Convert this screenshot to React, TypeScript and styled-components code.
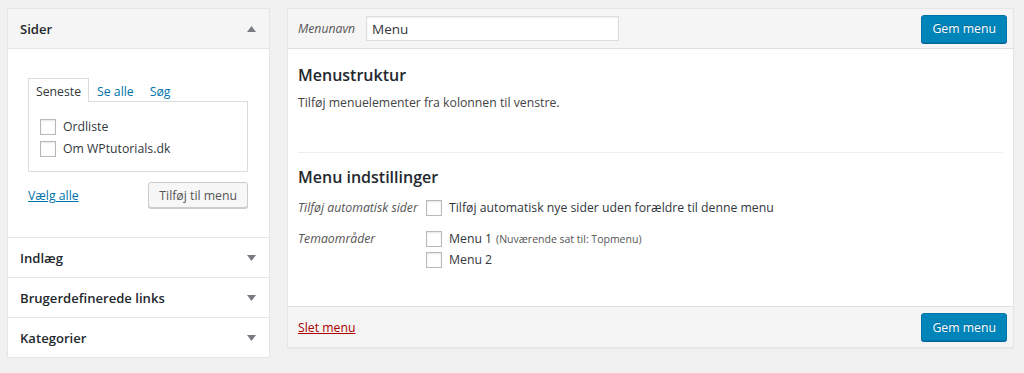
import React from "react";
import styled, { createGlobalStyle } from "styled-components";

const Global = createGlobalStyle`
  html, body { margin: 0; padding: 0; background: #f1f1f1; }
  body { font-family: "Open Sans", "Liberation Sans", sans-serif; font-size: 12.25px; color: #444; }
  * { box-sizing: border-box; }
`;

const Page = styled.div`
  display: flex;
  align-items: flex-start;
  gap: 17px;
  padding: 8px 10px 0 7px;
`;

const Sidebar = styled.div`
  width: 263px;
  flex: none;
  background: #fff;
  border: 1px solid #e5e5e5;
  box-shadow: 0 1px 1px rgba(0, 0, 0, 0.04);
`;

const SectionTitle = styled.div<{ $open?: boolean; $first?: boolean }>`
  display: flex;
  align-items: center;
  justify-content: space-between;
  height: 40px;
  padding: 0 13px 0 12px;
  font-size: 13.1px;
  font-weight: 600;
  color: #23282d;
  background: ${(p) => (p.$open ? "#f5f5f5" : "#fff")};
  border-top: ${(p) => (p.$first ? "none" : "1px solid #e5e5e5")};
  border-bottom: ${(p) => (p.$open ? "1px solid #e5e5e5" : "none")};
`;

const Arrow = styled.svg`
  width: 9px;
  height: 6px;
  fill: #787c82;
`;

const SectionBody = styled.div`
  padding: 29px 21px 29px 20px;
`;

const Tabs = styled.div`
  display: flex;
  align-items: flex-end;
  height: 23px;
`;

const Tab = styled.div<{ $active?: boolean }>`
  height: ${(p) => (p.$active ? "24px" : "23px")};
  padding: 3px 7px 0;
  line-height: 19px;
  margin-bottom: ${(p) => (p.$active ? "-1px" : "0")};
  position: relative;
  color: ${(p) => (p.$active ? "#32373c" : "#0073aa")};
  background: ${(p) => (p.$active ? "#fff" : "transparent")};
  border: 1px solid ${(p) => (p.$active ? "#dcdcde" : "transparent")};
  border-bottom: none;
`;

const TabPanel = styled.div`
  border: 1px solid #dcdcde;
  background: #fff;
  height: 71px;
  padding: 17px 11px 0;
  display: flex;
  flex-direction: column;
  gap: 6px;
`;

const CheckRow = styled.label`
  display: flex;
  align-items: center;
  gap: 7px;
  line-height: 16px;
  color: #32373c;
`;

const Check = styled.input.attrs({ type: "checkbox" })`
  appearance: none;
  margin: 0;
  width: 16px;
  height: 16px;
  flex: none;
  border: 1px solid #b4b9be;
  background: #fff;
  box-shadow: inset 0 1px 2px rgba(0, 0, 0, 0.1);
`;

const ActionRow = styled.div`
  display: flex;
  align-items: center;
  justify-content: space-between;
  margin-top: 10px;
`;

const Link = styled.a<{ $danger?: boolean }>`
  color: ${(p) => (p.$danger ? "#a00" : "#0073aa")};
  text-decoration: underline;
  cursor: pointer;
`;

const SecondaryButton = styled.button`
  height: 26px;
  padding: 0 10px;
  font: inherit;
  font-size: 12.25px;
  color: #555;
  background: #f7f7f7;
  border: 1px solid #ccc;
  border-radius: 3px;
  box-shadow: 0 1px 0 #ccc;
`;

const PrimaryButton = styled.button`
  height: 28px;
  padding: 0 10px;
  font: inherit;
  font-size: 12.25px;
  color: #fff;
  background: #0085ba;
  border: 1px solid #0073aa;
  border-radius: 3px;
  box-shadow: 0 1px 0 #006799;
  text-shadow: 0 -1px 1px #006799;
`;

const Editor = styled.div`
  flex: 1;
  background: #fff;
  border: 1px solid #e5e5e5;
  box-shadow: 0 1px 1px rgba(0, 0, 0, 0.04);
`;

const Bar = styled.div<{ $bottom?: boolean }>`
  display: flex;
  align-items: center;
  height: ${(p) => (p.$bottom ? "41px" : "40px")};
  padding: 0 6px 0 10px;
  background: #f5f5f5;
  border-top: ${(p) => (p.$bottom ? "1px solid #dfdfdf" : "none")};
  border-bottom: ${(p) => (p.$bottom ? "none" : "1px solid #dfdfdf")};
`;

const Spacer = styled.div`
  flex: 1;
`;

const NameLabel = styled.span`
  font-style: italic;
  color: #555;
  width: 68px;
`;

const NameInput = styled.input`
  width: 253px;
  height: 25px;
  padding: 0 5px;
  font: inherit;
  font-size: 13.5px;
  color: #32373c;
  border: 1px solid #ddd;
  box-shadow: inset 0 1px 2px rgba(0, 0, 0, 0.07);
  background: #fff;
  outline: none;
`;

const Body = styled.div`
  padding: 14px 10px 38px;
`;

const Heading = styled.h3`
  margin: 0;
  font-size: 16px;
  line-height: 24px;
  font-weight: 600;
  color: #23282d;
`;

const Desc = styled.p`
  margin: 6px 0 0;
  line-height: 20px;
  color: #444;
`;

const Divider = styled.hr`
  margin: 39px 0 12px;
  border: none;
  border-top: 1px solid #eee;
`;

const SettingRow = styled.div<{ $gap: number }>`
  display: flex;
  align-items: flex-start;
  margin-top: ${(p) => p.$gap}px;
`;

const SettingLabel = styled.div`
  width: 128px;
  flex: none;
  font-style: italic;
  color: #555;
  line-height: 20px;
`;

const SettingOptions = styled.div`
  display: flex;
  flex-direction: column;
  gap: 5px;
  padding-top: 2px;
`;

const OptionRow = styled.label`
  display: flex;
  align-items: center;
  gap: 7px;
  line-height: 16px;
  color: #32373c;
`;

const Note = styled.span`
  font-size: 10.5px;
  color: #555;
  margin-left: 4px;
`;

const UpArrow = () => (
  <Arrow viewBox="0 0 9 6">
    <polygon points="0,6 9,6 4.5,0" />
  </Arrow>
);

const DownArrow = () => (
  <Arrow viewBox="0 0 9 6">
    <polygon points="0,0 9,0 4.5,6" />
  </Arrow>
);

export default function App() {
  return (
    <>
      <Global />
      <Page>
        <Sidebar>
          <SectionTitle $open $first>
            <span>Sider</span>
            <UpArrow />
          </SectionTitle>
          <SectionBody>
            <Tabs>
              <Tab $active>Seneste</Tab>
              <Tab>Se alle</Tab>
              <Tab>Søg</Tab>
            </Tabs>
            <TabPanel>
              <CheckRow>
                <Check />
                Ordliste
              </CheckRow>
              <CheckRow>
                <Check />
                Om WPtutorials.dk
              </CheckRow>
            </TabPanel>
            <ActionRow>
              <Link>Vælg alle</Link>
              <SecondaryButton>Tilføj til menu</SecondaryButton>
            </ActionRow>
          </SectionBody>
          <SectionTitle>
            <span>Indlæg</span>
            <DownArrow />
          </SectionTitle>
          <SectionTitle>
            <span>Brugerdefinerede links</span>
            <DownArrow />
          </SectionTitle>
          <SectionTitle>
            <span>Kategorier</span>
            <DownArrow />
          </SectionTitle>
        </Sidebar>

        <Editor>
          <Bar>
            <NameLabel>Menunavn</NameLabel>
            <NameInput defaultValue="Menu" />
            <Spacer />
            <PrimaryButton>Gem menu</PrimaryButton>
          </Bar>
          <Body>
            <Heading>Menustruktur</Heading>
            <Desc>Tilføj menuelementer fra kolonnen til venstre.</Desc>
            <Divider />
            <Heading>Menu indstillinger</Heading>
            <SettingRow $gap={9}>
              <SettingLabel>Tilføj automatisk sider</SettingLabel>
              <SettingOptions>
                <OptionRow>
                  <Check />
                  <span>Tilføj automatisk nye sider uden forældre til denne menu</span>
                </OptionRow>
              </SettingOptions>
            </SettingRow>
            <SettingRow $gap={11}>
              <SettingLabel>Temaområder</SettingLabel>
              <SettingOptions>
                <OptionRow>
                  <Check />
                  <span>
                    Menu 1<Note>(Nuværende sat til: Topmenu)</Note>
                  </span>
                </OptionRow>
                <OptionRow>
                  <Check />
                  <span>Menu 2</span>
                </OptionRow>
              </SettingOptions>
            </SettingRow>
          </Body>
          <Bar $bottom>
            <Link $danger>Slet menu</Link>
            <Spacer />
            <PrimaryButton>Gem menu</PrimaryButton>
          </Bar>
        </Editor>
      </Page>
    </>
  );
}
